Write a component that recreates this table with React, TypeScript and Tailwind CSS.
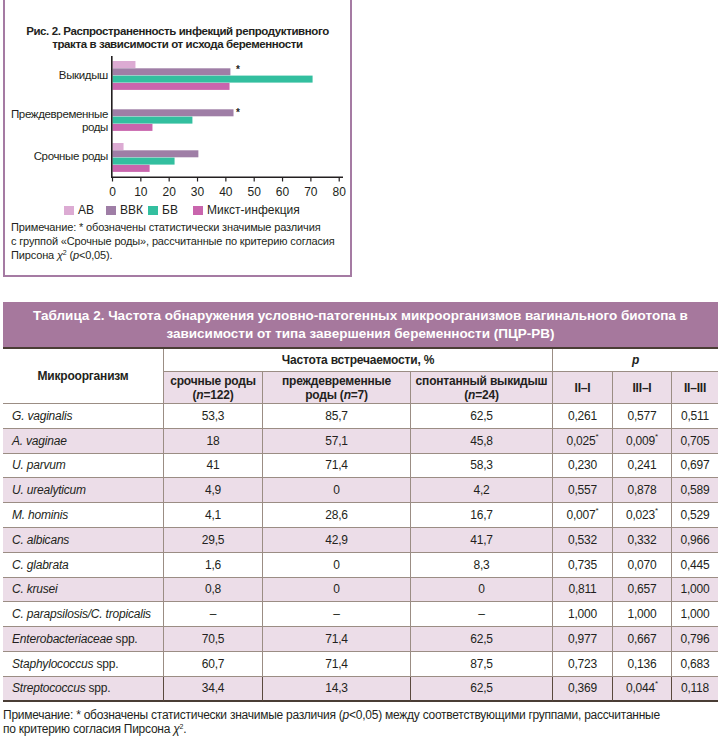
const ink = '#231f20';

type Bar = { y: number; v: number; c: string };

const colors = {
  ab: '#dcabd3',
  bbk: '#9f7ea6',
  bv: '#33bf9f',
  mix: '#c965ad',
};

const x0 = 112.5;
const scale = 2.834;

const bars: Bar[] = [
  { y: 62, v: 8.1, c: colors.ab },
  { y: 69.3, v: 41.6, c: colors.bbk },
  { y: 76.6, v: 70.6, c: colors.bv },
  { y: 83.9, v: 41.3, c: colors.mix },
  { y: 110.3, v: 42.7, c: colors.bbk },
  { y: 117.6, v: 28.2, c: colors.bv },
  { y: 124.9, v: 14.1, c: colors.mix },
  { y: 144, v: 3.9, c: colors.ab },
  { y: 151.3, v: 30.3, c: colors.bbk },
  { y: 158.6, v: 21.9, c: colors.bv },
  { y: 165.9, v: 13.1, c: colors.mix },
];

function Chart() {
  return (
    <svg width={345} height={148} viewBox="5 52 345 148" className="block">
      <g fill={ink} fontSize="11.5" fontFamily="'Liberation Sans', Arial, sans-serif" textAnchor="end" letterSpacing="-0.35">
        <text x={108} y={80}>Выкидыш</text>
        <text x={108} y={119}>Преждевременные</text>
        <text x={108} y={132}>роды</text>
        <text x={108} y={161}>Срочные роды</text>
      </g>
      {bars.map((b, i) => (
        <rect key={i} x={x0} y={b.y} width={b.v * scale} height={7} fill={b.c} />
      ))}
      <g fill={ink} fontSize="10" fontWeight="bold" fontFamily="'Liberation Sans', Arial, sans-serif">
        <text x={236} y={74}>*</text>
        <text x={236} y={117}>*</text>
      </g>
      <line x1={111.8} y1={57} x2={111.8} y2={179} stroke={ink} strokeWidth={1.6} />
      <line x1={111} y1={178.2} x2={343} y2={178.2} stroke={ink} strokeWidth={1.6} />
      {[0, 10, 20, 30, 40, 50, 60, 70, 80].map((t) => (
        <g key={t}>
          <line x1={x0 + t * scale} y1={178} x2={x0 + t * scale} y2={182.5} stroke={ink} strokeWidth={1.2} />
          <text
            x={x0 + t * scale}
            y={197}
            textAnchor="middle"
            fontSize="12"
            fill={ink}
            fontFamily="'Liberation Sans', Arial, sans-serif"
          >
            {t}
          </text>
        </g>
      ))}
    </svg>
  );
}

function Legend() {
  const items = [
    { c: colors.ab, t: 'АВ', w: 'w-[42px]' },
    { c: colors.bbk, t: 'ВВК', w: 'w-[42px]' },
    { c: colors.bv, t: 'БВ', w: 'w-[45px]' },
    { c: colors.mix, t: 'Микст-инфекция', w: 'w-auto' },
  ];
  return (
    <div className="flex items-center h-[14px] mt-[4px] pl-[59px] text-[12px]">
      {items.map((it) => (
        <div key={it.t} className={`flex items-center gap-[4px] ${it.w}`}>
          <span className="w-[10px] h-[9px] block" style={{ background: it.c }} />
          <span>{it.t}</span>
        </div>
      ))}
    </div>
  );
}

type Row = { name: React.ReactNode; vals: string[]; p: string[] };

const it = (s: string) => <i>{s}</i>;

const rows: Row[] = [
  { name: it('G. vaginalis'), vals: ['53,3', '85,7', '62,5'], p: ['0,261', '0,577', '0,511'] },
  { name: it('A. vaginae'), vals: ['18', '57,1', '45,8'], p: ['0,025*', '0,009*', '0,705'] },
  { name: it('U. parvum'), vals: ['41', '71,4', '58,3'], p: ['0,230', '0,241', '0,697'] },
  { name: it('U. urealyticum'), vals: ['4,9', '0', '4,2'], p: ['0,557', '0,878', '0,589'] },
  { name: it('M. hominis'), vals: ['4,1', '28,6', '16,7'], p: ['0,007*', '0,023*', '0,529'] },
  { name: it('C. albicans'), vals: ['29,5', '42,9', '41,7'], p: ['0,532', '0,332', '0,966'] },
  { name: it('C. glabrata'), vals: ['1,6', '0', '8,3'], p: ['0,735', '0,070', '0,445'] },
  { name: it('C. krusei'), vals: ['0,8', '0', '0'], p: ['0,811', '0,657', '1,000'] },
  { name: it('C. parapsilosis/C. tropicalis'), vals: ['–', '–', '–'], p: ['1,000', '1,000', '1,000'] },
  { name: <><i>Enterobacteriaceae</i> spp.</>, vals: ['70,5', '71,4', '62,5'], p: ['0,977', '0,667', '0,796'] },
  { name: <><i>Staphylococcus</i> spp.</>, vals: ['60,7', '71,4', '87,5'], p: ['0,723', '0,136', '0,683'] },
  { name: <><i>Streptococcus</i> spp.</>, vals: ['34,4', '14,3', '62,5'], p: ['0,369', '0,044*', '0,118'] },
];

function PVal({ v }: { v: string }) {
  if (v.endsWith('*')) {
    return (
      <span>
        {v.slice(0, -1)}
        <span className="text-[8px] align-top relative top-[-1px]">*</span>
      </span>
    );
  }
  return <span>{v}</span>;
}

const vline = 'border-r border-[#5a493d]';
const hline = 'border-b border-[#9b8d84]';

function Table() {
  return (
    <div className="ml-[3px] w-[715px]">
      <div className="bg-[#a6789d] h-[45px] flex flex-col items-center justify-center text-white font-bold text-[13.5px] leading-[18px] text-center">
        <div>Таблица 2. Частота обнаружения условно-патогенных микроорганизмов вагинального биотопа в</div>
        <div>зависимости от типа завершения беременности (ПЦР-РВ)</div>
      </div>
      <div className="h-[2px] bg-[#4a3d35]" />
      <div className="grid grid-cols-[161px_99px_148px_142px_60px_59px_46px] grid-rows-[23px_32px_repeat(12,24.8px)] text-[12px] tracking-[-0.2px]">
        <div className={`row-span-2 flex items-center justify-center font-bold ${vline} ${hline}`}>Микроорганизм</div>
        <div className={`col-span-3 flex items-center justify-center font-bold ${vline} ${hline}`}>Частота встречаемости, %</div>
        <div className={`col-span-3 flex items-center justify-center font-bold italic ${hline}`}>p</div>
        <div className={`bg-[#ecdde8] flex items-center justify-center text-center font-bold leading-[14px] ${vline} ${hline}`}>
          <div>срочные роды<br />(<i>n</i>=122)</div>
        </div>
        <div className={`bg-[#ecdde8] flex items-center justify-center text-center font-bold leading-[14px] ${vline} ${hline}`}>
          <div>преждевременные<br />роды (<i>n</i>=7)</div>
        </div>
        <div className={`bg-[#ecdde8] flex items-center justify-center text-center font-bold leading-[14px] ${vline} ${hline}`}>
          <div>спонтанный выкидыш<br />(<i>n</i>=24)</div>
        </div>
        <div className={`bg-[#ecdde8] flex items-center justify-center font-bold ${vline} ${hline}`}>II–I</div>
        <div className={`bg-[#ecdde8] flex items-center justify-center font-bold ${vline} ${hline}`}>III–I</div>
        <div className={`bg-[#ecdde8] flex items-center justify-center font-bold ${hline}`}>II–III</div>
        {rows.map((r, i) => {
          const bg = i % 2 === 1 ? 'bg-[#ecdde8]' : 'bg-white';
          const last = i === rows.length - 1;
          const hb = last ? 'border-b-2 border-b-[#4a3d35]' : hline;
          return [
            <div key={`n${i}`} className={`${bg} flex items-center pl-[9px] ${vline} ${hb}`}>
              <span>{r.name}</span>
            </div>,
            ...r.vals.map((v, j) => (
              <div key={`v${i}${j}`} className={`${bg} flex items-center justify-center ${vline} ${hb}`}>{v}</div>
            )),
            ...r.p.map((v, j) => (
              <div key={`p${i}${j}`} className={`${bg} flex items-center justify-center ${j < 2 ? vline : ''} ${hb}`}>
                <PVal v={v} />
              </div>
            )),
          ];
        })}
      </div>
      <div className="mt-[6px] text-[12px] leading-[14px] tracking-[-0.25px]">
        Примечание: * обозначены статистически значимые различия (<i>p</i>&lt;0,05) между соответствующими группами, рассчитанные
        <br />
        по критерию согласия Пирсона <i>χ</i>
        <sup className="text-[7px]">2</sup>.
      </div>
    </div>
  );
}

export default function App() {
  return (
    <div className="w-[720px] h-[742px] bg-white font-['Liberation_Sans',Arial,sans-serif] text-[#231f20] overflow-hidden">
      <div className="ml-[3px] w-[349px] h-[277px] border-x-2 border-b-2 border-[#a57ba3]">
        <div className="pt-[25px] text-center font-bold text-[11.5px] leading-[13px] tracking-[-0.4px]">
          Рис. 2. Распространенность инфекций репродуктивного
          <br />
          тракта в зависимости от исхода беременности
        </div>
        <Chart />
        <Legend />
        <div className="mt-[4px] pl-[6px] text-[11px] leading-[13.75px] tracking-[-0.15px]">
          Примечание: * обозначены статистически значимые различия
          <br />
          с группой «Срочные роды», рассчитанные по критерию согласия
          <br />
          Пирсона <i>χ</i>
          <sup className="text-[7px]">2</sup> (<i>p</i>&lt;0,05).
        </div>
      </div>
      <div className="h-[25px]" />
      <Table />
    </div>
  );
}
